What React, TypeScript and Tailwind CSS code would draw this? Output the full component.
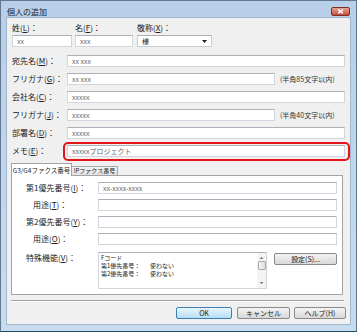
// 個人の追加ダイアログ (Windows 7 風)
import React from 'react';

const JP = "font-['Noto_Sans_CJK_JP','Noto_Sans',sans-serif]";

function Label({ text, k, className = '' }: { text: string; k: string; className?: string }) {
  return (
    <span className={`text-[8px] leading-[10px] text-[#222] whitespace-nowrap ${className}`}>
      {text}(<span className="underline">{k}</span>)：
    </span>
  );
}

function Box({ value = '', className = '' }: { value?: React.ReactNode; className?: string }) {
  return (
    <div
      className={`h-[12px] bg-white border border-[#d2d6dc] border-t-[#abb0b8] flex items-center pl-[4px] text-[7px] leading-none text-[#666] whitespace-nowrap overflow-hidden ${className}`}
    >
      {value}
    </div>
  );
}

function Row({ label, k, value = '', short = false, note = '' }: { label: string; k: string; value?: string; short?: boolean; note?: string }) {
  return (
    <div className="flex items-center h-[12px]">
      <Label text={label} k={k} className="w-[55px] shrink-0" />
      <Box value={value} className={short ? 'w-[208px]' : 'w-[278px]'} />
      {note && <span className="ml-[5px] text-[7px] leading-none text-[#333] whitespace-nowrap">{note}</span>}
    </div>
  );
}

function Btn({ children, primary = false, className = '' }: { children: React.ReactNode; primary?: boolean; className?: string }) {
  return (
    <div
      className={`h-[12px] rounded-[2px] border flex items-center justify-center text-[7px] leading-none text-[#222] whitespace-nowrap ${
        primary
          ? 'border-[#3c7fb1] bg-gradient-to-b from-[#eaf6fd] to-[#b6def5]'
          : 'border-[#8a8a8a] bg-gradient-to-b from-[#f4f4f4] to-[#d8d8d8]'
      } ${className}`}
    >
      {children}
    </div>
  );
}

export default function App() {
  return (
    <div
      className={`w-[357px] h-[332px] flex flex-col bg-gradient-to-b from-[#b7cfe8] to-[#c8dcef] border border-[#61788f] border-b-[#174f63] ${JP}`}
    >
      {/* タイトルバー */}
      <div className="h-[16px] shrink-0 flex justify-between pl-[6px] pr-[6px]">
        <span className="mt-[6px] text-[8px] leading-[10px] text-[#1a1a1a]">個人の追加</span>
        <div className="mt-[6px] w-[19px] h-[9px] rounded-[2px] border border-[#7d2f27] bg-gradient-to-b from-[#e7a596] to-[#c44a3b] flex items-center justify-center">
          <svg width="7" height="5" viewBox="0 0 7 5">
            <path d="M1.2 0.6L5.8 4.4M5.8 0.6L1.2 4.4" stroke="white" strokeWidth="1.4" />
          </svg>
        </div>
      </div>

      <div className="flex-1 mx-[5px] mb-[6px] bg-[#f0f0f0] border border-[#a3b7cc] flex flex-col">
        {/* 姓・名・敬称 */}
        <div className="flex pl-[5px] pt-[5px]">
          <div className="w-[60px] flex flex-col gap-[2px]">
            <Label text="姓" k="L" />
            <Box value="xx" />
          </div>
          <div className="w-[58px] ml-[3px] flex flex-col gap-[2px]">
            <Label text="名" k="F" />
            <Box value="xxx" />
          </div>
          <div className="w-[75px] ml-[4px] flex flex-col gap-[2px]">
            <Label text="敬称" k="X" />
            <div className="h-[12px] bg-white border border-[#c9ced5] border-t-[#abb0b8] flex items-center justify-between pl-[4px] pr-[4px]">
              <span className="text-[7px] leading-none text-[#222]">様</span>
              <svg width="5" height="3" viewBox="0 0 5 3">
                <path d="M0 0H5L2.5 3Z" fill="#222" />
              </svg>
            </div>
          </div>
        </div>

        {/* 宛先情報 */}
        <div className="flex flex-col gap-[6px] mt-[8px] pl-[5px]">
          <Row label="宛先名" k="M" value="xx xxx" />
          <Row label="フリガナ" k="G" value="xx xxx" short note="(半角85文字以内)" />
          <Row label="会社名" k="C" value="xxxxx" />
          <Row label="フリガナ" k="J" value="xxxxx" short note="(半角40文字以内)" />
          <Row label="部署名" k="D" value="xxxxx" />
          <div className="flex items-center h-[12px]">
            <Label text="メモ" k="E" className="w-[55px] shrink-0" />
            <div className="relative w-[278px]">
              <Box value="xxxxxプロジェクト" className="border-[#a9c3dc] border-t-[#8fb0cf] bg-[#fbfdff] text-[#333]" />
              <span className="absolute -left-[4px] -top-[3px] -right-[5px] -bottom-[4px] border-2 border-[#e5141b] rounded-[5px]" />
            </div>
          </div>
        </div>

        {/* タブ */}
        <div className="mt-[6px] ml-[4px] mr-[7px] flex flex-col">
          <div className="flex items-end h-[12px] relative z-10">
            <div className="w-[61px] h-[13px] -mb-[1px] bg-white border border-b-0 border-[#a3a3a3] flex items-center justify-center text-[6.5px] leading-none text-[#222] whitespace-nowrap">
              G3/G4ファクス番号
            </div>
            <div className="w-[46px] h-[9px] bg-gradient-to-b from-[#f3f3f3] to-[#e2e2e2] border border-b-0 border-l-0 border-[#a8a8a8] flex items-center justify-center text-[6px] leading-none text-[#222] whitespace-nowrap">
              IPファクス番号
            </div>
          </div>
          <div className="h-[120px] bg-white border border-[#a3a3a3] pt-[6px] pl-[14px] pr-[5px] flex flex-col">
            <div className="flex flex-col gap-[5px]">
              <div className="flex items-center">
                <Label text="第1優先番号" k="I" className="w-[72px] shrink-0" />
                <Box value="xx-xxxx-xxxx" className="flex-1" />
              </div>
              <div className="flex items-center">
                <Label text="用途" k="T" className="w-[72px] shrink-0 pl-[7px]" />
                <Box className="flex-1" />
              </div>
              <div className="flex items-center">
                <Label text="第2優先番号" k="Y" className="w-[72px] shrink-0" />
                <Box className="flex-1" />
              </div>
              <div className="flex items-center">
                <Label text="用途" k="O" className="w-[72px] shrink-0 pl-[7px]" />
                <Box className="flex-1" />
              </div>
            </div>
            <div className="flex items-start mt-[7px]">
              <Label text="特殊機能" k="V" className="w-[72px] shrink-0 mt-[1px]" />
              <div className="w-[169px] h-[37px] bg-white border border-[#d2d6dc] border-t-[#abb0b8] flex">
                <div className="flex-1 pl-[2px] pt-[1px] text-[6px] leading-[8px] text-[#222] whitespace-nowrap">
                  <div>Fコード</div>
                  <div>
                    <span className="inline-block w-[49px]">第1優先番号：</span>使わない
                  </div>
                  <div>
                    <span className="inline-block w-[49px]">第2優先番号：</span>使わない
                  </div>
                </div>
                <div className="w-[9px] bg-[#f4f4f4] flex flex-col items-center">
                  <svg width="5" height="7" viewBox="0 0 5 7" className="mt-[1px]">
                    <path d="M0.5 5L2.5 3L4.5 5Z" fill="#777" />
                  </svg>
                  <div className="w-[8px] h-[9px] bg-gradient-to-r from-[#f6f6f6] to-[#dcdcdc] border border-[#a8a8a8] rounded-[1px]" />
                  <div className="flex-1" />
                  <svg width="5" height="7" viewBox="0 0 5 7" className="mb-[1px]">
                    <path d="M0.5 2L2.5 4L4.5 2Z" fill="#777" />
                  </svg>
                </div>
              </div>
              <Btn className="w-[63px] ml-[7px] mt-[1px]">設定(S)...</Btn>
            </div>
          </div>
        </div>

        {/* 区切り線 */}
        <div className="mt-[5px] ml-[4px] mr-[6px] border-t border-b border-t-[#a0a0a0] border-b-white" />

        {/* ボタン */}
        <div className="flex justify-end gap-[5px] mt-[5px] pr-[4px]">
          <Btn primary className="w-[56px]">OK</Btn>
          <Btn className="w-[53px]">キャンセル</Btn>
          <Btn className="w-[52px] -ml-[1px]">ヘルプ(H)</Btn>
        </div>
      </div>
    </div>
  );
}
